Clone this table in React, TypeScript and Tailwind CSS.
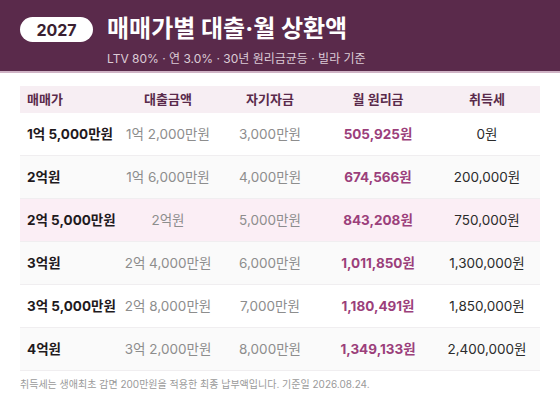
const rows = [
  { price: "1억 5,000만원", loan: "1억 2,000만원", own: "3,000만원", pay: "505,925원", tax: "0원", bg: "bg-white" },
  { price: "2억원", loan: "1억 6,000만원", own: "4,000만원", pay: "674,566원", tax: "200,000원", bg: "bg-[#fafafa]" },
  { price: "2억 5,000만원", loan: "2억원", own: "5,000만원", pay: "843,208원", tax: "750,000원", bg: "bg-[#fbeef5]" },
  { price: "3억원", loan: "2억 4,000만원", own: "6,000만원", pay: "1,011,850원", tax: "1,300,000원", bg: "bg-[#fafafa]" },
  { price: "3억 5,000만원", loan: "2억 8,000만원", own: "7,000만원", pay: "1,180,491원", tax: "1,850,000원", bg: "bg-white" },
  { price: "4억원", loan: "3억 2,000만원", own: "8,000만원", pay: "1,349,133원", tax: "2,400,000원", bg: "bg-[#fafafa]" },
];

export default function App() {
  return (
    <div className="w-[560px] h-[420px] bg-white font-['Inter','Noto_Sans_CJK_KR',sans-serif] overflow-hidden">
      <div className="h-[73px] bg-[#5a2a4b] border-b-2 border-[#cfb3c5] px-5 pt-[17px] flex gap-[14px]">
        <div className="h-[25px] w-[73px] rounded-full bg-white text-[#3a1f31] text-[16px] font-bold flex items-center justify-center leading-none">
          2027
        </div>
        <div className="flex flex-col">
          <div className="text-white text-[24px] font-bold leading-[26px] -mt-[1px]">매매가별 대출·월 상환액</div>
          <div className="text-[#dccbd6] text-[12px] leading-[16px] mt-[9px]">LTV 80% · 연 3.0% · 30년 원리금균등 · 빌라 기준</div>
        </div>
      </div>
      <div className="px-5 pt-[13px]">
        <div className="grid grid-cols-[98px_100px_104px_112px_106px] h-[27px] items-center bg-[#f7eef3] text-[13px] font-semibold text-[#5a2a4b]">
          <div className="pl-[7px]">매매가</div>
          <div className="text-center">대출금액</div>
          <div className="text-center">자기자금</div>
          <div className="text-center">월 원리금</div>
          <div className="text-center">취득세</div>
        </div>
        {rows.map((r) => (
          <div key={r.price} className={`grid grid-cols-[98px_100px_104px_112px_106px] h-[43px] items-center border-b border-[#f0eef0] text-[13.5px] ${r.bg}`}>
            <div className="pl-[7px] font-bold text-[#1f1a1d] whitespace-nowrap">{r.price}</div>
            <div className="text-center text-[#8d8d8d] whitespace-nowrap">{r.loan}</div>
            <div className="text-center text-[#8d8d8d] whitespace-nowrap">{r.own}</div>
            <div className="text-center font-bold text-[#9b3f7b] whitespace-nowrap">{r.pay}</div>
            <div className="text-center text-[#2b2b2b] whitespace-nowrap">{r.tax}</div>
          </div>
        ))}
        <div className="mt-[6px] text-[10px] text-[#9a9a9a]">
          취득세는 생애최초 감면 200만원을 적용한 최종 납부액입니다. 기준일 2026.08.24.
        </div>
      </div>
    </div>
  );
}
